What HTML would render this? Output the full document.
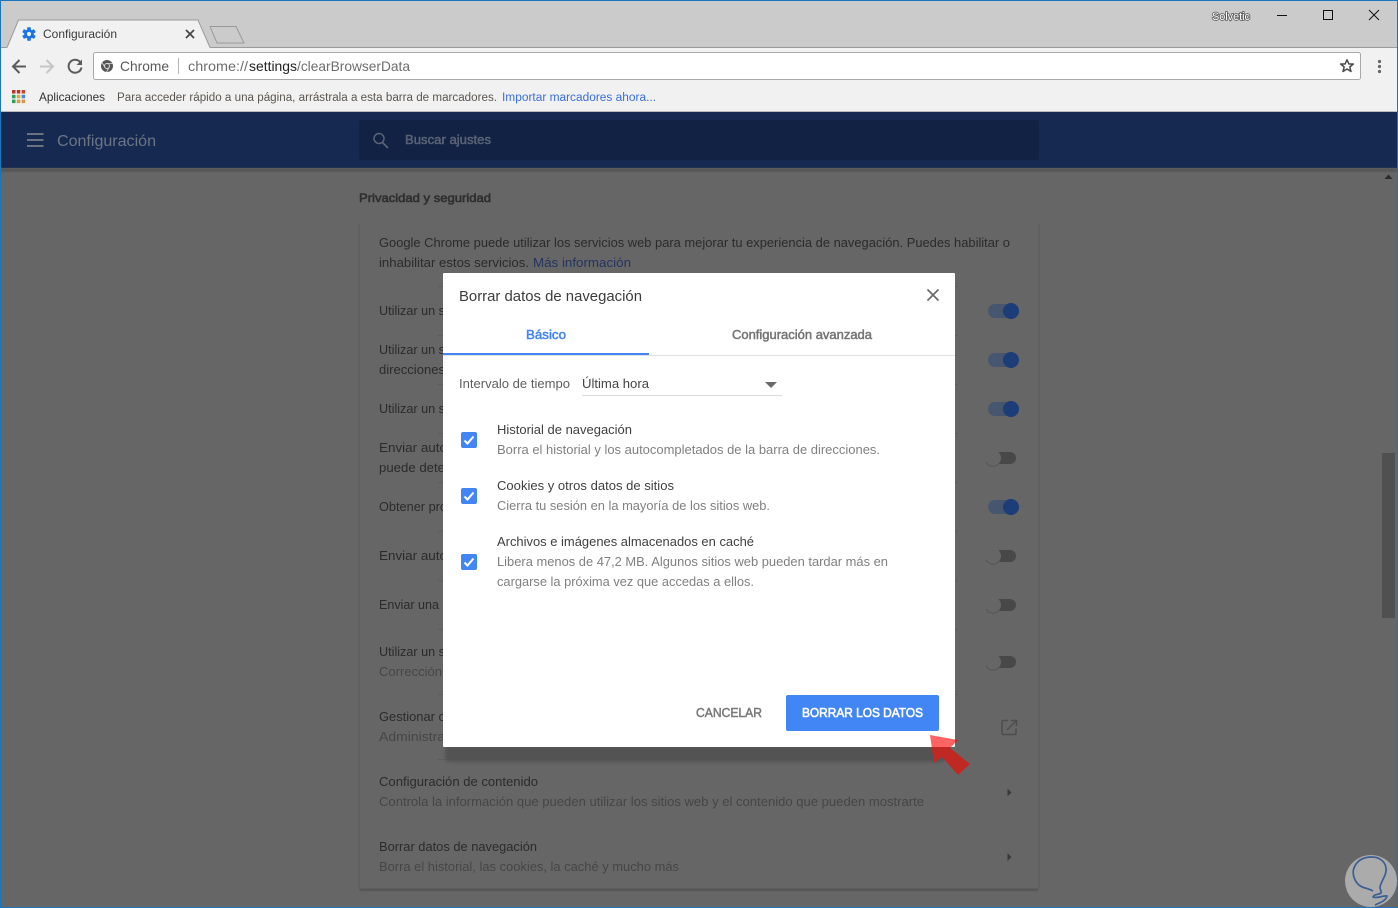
<!DOCTYPE html>
<html lang="es">
<head>
<meta charset="utf-8">
<title>Configuración</title>
<style>
html,body{margin:0;padding:0;width:1398px;height:908px;overflow:hidden;background:#666}
svg{display:block}
text{font-family:"Liberation Sans",sans-serif;white-space:pre}
.m{stroke-width:.5}
</style>
</head>
<body>
<svg xmlns="http://www.w3.org/2000/svg" width="1398" height="908" viewBox="0 0 1398 908">
<defs>
<filter id="bl" x="-10%" y="-50%" width="120%" height="200%"><feGaussianBlur stdDeviation="1.5"/></filter>
<filter id="bl2" x="-10%" y="-10%" width="120%" height="120%"><feGaussianBlur stdDeviation="1"/></filter>
<clipPath id="arrTop"><rect x="920" y="725" width="35" height="22"/></clipPath>
<clipPath id="arrBot"><path d="M955 725H990V790H920V747H955Z"/></clipPath>
<clipPath id="logo"><rect x="1340" y="850" width="57" height="57"/></clipPath>
</defs>

<rect width="1398" height="908" fill="#666"/>

<!-- title bar -->
<rect x="0" y="0" width="1398" height="48" fill="#cbcbcb"/>
<rect x="0" y="47" width="1398" height="1" fill="#9b9b9b"/>
<rect x="0" y="48" width="1398" height="63" fill="#f1f1f1"/>
<rect x="0" y="111" width="1398" height="1" fill="#bcbcbc"/>

<!-- tabs -->
<path d="M210 26.500H236L244 43H217Z" fill="#cbcbcb" stroke="#9a9a9a" stroke-width="1" stroke-linejoin="round"/>
<path d="M7 48L18.500 20H198L210 48Z" fill="#f1f1f1"/>
<path d="M7 47.500L18.500 20H198L210 47.500" fill="none" stroke="#9b9b9b" stroke-width="1"/>
<g transform="translate(29 34)" fill="#1a73e8">
<circle r="4.800"/>
<rect x="-1.800" y="-6.800" width="3.600" height="13.600" rx=".6"/>
<rect x="-1.800" y="-6.800" width="3.600" height="13.600" rx=".6" transform="rotate(60)"/>
<rect x="-1.800" y="-6.800" width="3.600" height="13.600" rx=".6" transform="rotate(120)"/>
<circle r="2.100" fill="#f1f1f1"/>
</g>
<text x="43" y="38" font-size="12" fill="#3a3a3a" textLength="74" lengthAdjust="spacingAndGlyphs">Configuración</text>
<path d="M186 30L194 38M194 30L186 38" stroke="#444" stroke-width="1.700" fill="none"/>

<!-- window controls -->
<text x="1212" y="20" font-size="11" fill="none" stroke="#555" stroke-width="1.500" textLength="38" lengthAdjust="spacingAndGlyphs">Solvetic</text>
<text x="1212" y="20" font-size="11" fill="#fff" textLength="38" lengthAdjust="spacingAndGlyphs">Solvetic</text>
<path d="M1277 15.500H1287" stroke="#111" stroke-width="1"/>
<rect x="1323.500" y="10.500" width="9" height="9" fill="none" stroke="#111" stroke-width="1"/>
<path d="M1369 10L1379 20M1379 10L1369 20" stroke="#111" stroke-width="1" fill="none"/>

<!-- toolbar -->
<path d="M26 66.500H13.500M19.500 60L13 66.500L19.500 73" fill="none" stroke="#5c5c5c" stroke-width="2"/>
<path d="M40 66.500H52.500M46.500 60L53 66.500L46.500 73" fill="none" stroke="#c6c6c6" stroke-width="2"/>
<path d="M80.200 62.200A6.500 6.500 0 1 0 81.500 67.500" fill="none" stroke="#5c5c5c" stroke-width="2"/>
<path d="M82 59.500V65H76.500Z" fill="#5c5c5c"/>
<rect x="93.500" y="52.500" width="1267" height="27" rx="2" fill="#fff" stroke="#a8a8a8"/>
<circle cx="107" cy="66" r="6" fill="#555"/>
<circle cx="107" cy="66" r="2.500" fill="#555" stroke="#ddd" stroke-width="1"/>
<path d="M107 63.500H112.500M104.800 67.200L102 62.500M109 67.500L106.500 72" stroke="#ddd" stroke-width=".8"/>
<text x="120" y="71" font-size="14" fill="#5a5a5a" textLength="49" lengthAdjust="spacingAndGlyphs">Chrome</text>
<rect x="178" y="58" width="1" height="16" fill="#b5b5b5"/>
<text x="188" y="71" font-size="14" fill="#6e6e6e" textLength="60" lengthAdjust="spacingAndGlyphs">chrome://</text>
<text x="249" y="71" font-size="14" fill="#222" textLength="48" lengthAdjust="spacingAndGlyphs">settings</text>
<text x="297" y="71" font-size="14" fill="#6e6e6e" textLength="113" lengthAdjust="spacingAndGlyphs">/clearBrowserData</text>
<path d="M1347 59.800L1348.900 64H1353.300L1349.800 67L1351 71.500L1347 69L1343 71.500L1344.200 67L1340.700 64H1345.100Z" fill="none" stroke="#4a4a4a" stroke-width="1.500" stroke-linejoin="round"/>
<g fill="#666"><circle cx="1379.500" cy="61.500" r="1.600"/><circle cx="1379.500" cy="66.500" r="1.600"/><circle cx="1379.500" cy="71.500" r="1.600"/></g>

<!-- bookmarks -->
<g>
<rect x="12" y="90" width="3.500" height="3.500" fill="#b8352b"/><rect x="16.800" y="90" width="3.500" height="3.500" fill="#b8352b"/><rect x="21.600" y="90" width="3.500" height="3.500" fill="#c8433a"/>
<rect x="12" y="94.800" width="3.500" height="3.500" fill="#2f9e58"/><rect x="16.800" y="94.800" width="3.500" height="3.500" fill="#d8a83a"/><rect x="21.600" y="94.800" width="3.500" height="3.500" fill="#4a86d8"/>
<rect x="12" y="99.600" width="3.500" height="3.500" fill="#2f9e58"/><rect x="16.800" y="99.600" width="3.500" height="3.500" fill="#d89848"/><rect x="21.600" y="99.600" width="3.500" height="3.500" fill="#d89848"/>
</g>
<text x="39" y="101" font-size="12" fill="#333" textLength="66" lengthAdjust="spacingAndGlyphs">Aplicaciones</text>
<text x="117" y="101" font-size="11.500" fill="#5c5650" textLength="380" lengthAdjust="spacingAndGlyphs">Para acceder rápido a una página, arrástrala a esta barra de marcadores.</text>
<text x="502" y="101" font-size="11.500" fill="#3b6fd8" textLength="154" lengthAdjust="spacingAndGlyphs">Importar marcadores ahora...</text>

<!-- settings header -->
<rect x="0" y="112" width="1398" height="56" fill="#152951"/>
<rect x="0" y="168" width="1398" height="4" fill="#555" filter="url(#bl2)"/>
<path d="M27 134H43.500M27 140H43.500M27 146H43.500" stroke="#6a7282" stroke-width="2"/>
<text x="57" y="146" font-size="16" fill="#6d7585" textLength="99" lengthAdjust="spacingAndGlyphs">Configuración</text>
<rect x="359" y="120" width="680" height="40" rx="2" fill="#122244"/>
<circle cx="379" cy="138.500" r="5" fill="none" stroke="#5c6678" stroke-width="1.400"/>
<path d="M382.500 142.500L388 148" stroke="#5c6678" stroke-width="1.600"/>
<text x="405" y="144" font-size="12.500" class="m" fill="#586274" stroke="#586274" textLength="86" lengthAdjust="spacingAndGlyphs">Buscar ajustes</text>

<!-- scrollbar -->
<path d="M1384.500 179L1388.500 174.500L1392.500 179Z" fill="#2b2b2b"/>
<rect x="1382" y="453" width="13" height="165" fill="#505050"/>

<!-- card -->
<text x="359" y="202" font-size="12" fill="#2f2f2f" stroke="#2f2f2f" style="stroke-width:.6" textLength="132" lengthAdjust="spacingAndGlyphs">Privacidad y seguridad</text>
<path d="M359 224V887Q359 889 361 889H1037Q1039 889 1039 887V224" fill="none" stroke="#5a5a5a" stroke-width="1"/>
<rect x="360" y="889" width="678" height="2" fill="#4e4e4e" filter="url(#bl2)"/>
<g fill="#5d5d5d">
<rect x="438" y="286" width="520" height="1"/><rect x="438" y="335" width="520" height="1"/><rect x="438" y="384" width="520" height="1"/>
<rect x="438" y="433" width="520" height="1"/><rect x="438" y="482" width="520" height="1"/><rect x="438" y="531" width="520" height="1"/>
<rect x="438" y="580" width="520" height="1"/><rect x="438" y="629" width="520" height="1"/><rect x="438" y="694" width="520" height="1"/>
<rect x="438" y="759" width="520" height="1"/>
</g>
<text x="379" y="247" font-size="13" fill="#2b2b2b" textLength="631" lengthAdjust="spacingAndGlyphs">Google Chrome puede utilizar los servicios web para mejorar tu experiencia de navegación. Puedes habilitar o</text>
<text x="379" y="267" font-size="13" fill="#2b2b2b" textLength="150" lengthAdjust="spacingAndGlyphs">inhabilitar estos servicios.</text>
<text x="533" y="267" font-size="13" fill="#25345f" textLength="98" lengthAdjust="spacingAndGlyphs">Más información</text>
<g font-size="13" fill="#2b2b2b">
<text x="379" y="315" textLength="66" lengthAdjust="spacingAndGlyphs">Utilizar un s</text>
<text x="379" y="354" textLength="66" lengthAdjust="spacingAndGlyphs">Utilizar un s</text>
<text x="379" y="374" textLength="66" lengthAdjust="spacingAndGlyphs">direcciones</text>
<text x="379" y="413" textLength="66" lengthAdjust="spacingAndGlyphs">Utilizar un s</text>
<text x="379" y="452" textLength="68" lengthAdjust="spacingAndGlyphs">Enviar auto</text>
<text x="379" y="472" textLength="66" lengthAdjust="spacingAndGlyphs">puede dete</text>
<text x="379" y="511" textLength="68" lengthAdjust="spacingAndGlyphs">Obtener pro</text>
<text x="379" y="560" textLength="68" lengthAdjust="spacingAndGlyphs">Enviar auto</text>
<text x="379" y="609" textLength="60" lengthAdjust="spacingAndGlyphs">Enviar una</text>
<text x="379" y="656" textLength="66" lengthAdjust="spacingAndGlyphs">Utilizar un s</text>
<text x="379" y="721" textLength="66" lengthAdjust="spacingAndGlyphs">Gestionar c</text>
<text x="379" y="786" textLength="159" lengthAdjust="spacingAndGlyphs">Configuración de contenido</text>
<text x="379" y="851" textLength="158" lengthAdjust="spacingAndGlyphs">Borrar datos de navegación</text>
</g>
<g font-size="13" fill="#464646">
<text x="379" y="676" textLength="63" lengthAdjust="spacingAndGlyphs">Corrección</text>
<text x="379" y="741" textLength="66" lengthAdjust="spacingAndGlyphs">Administra</text>
<text x="379" y="806" textLength="545" lengthAdjust="spacingAndGlyphs">Controla la información que pueden utilizar los sitios web y el contenido que pueden mostrarte</text>
<text x="379" y="871" textLength="300" lengthAdjust="spacingAndGlyphs">Borra el historial, las cookies, la caché y mucho más</text>
</g>

<!-- toggles on -->
<g fill="#47566f">
<rect x="988" y="304" width="28" height="14" rx="7"/><rect x="988" y="353" width="28" height="14" rx="7"/>
<rect x="988" y="402" width="28" height="14" rx="7"/><rect x="988" y="500" width="28" height="14" rx="7"/>
</g>
<g fill="#1c3d77">
<circle cx="1011" cy="311" r="8"/><circle cx="1011" cy="360" r="8"/><circle cx="1011" cy="409" r="8"/><circle cx="1011" cy="507" r="8"/>
</g>
<!-- toggles off -->
<g fill="#484848">
<rect x="994" y="452" width="22" height="12" rx="6"/><rect x="994" y="550" width="22" height="12" rx="6"/>
<rect x="994" y="599" width="22" height="12" rx="6"/><rect x="994" y="656" width="22" height="12" rx="6"/>
</g>
<g fill="#666">
<circle cx="993" cy="458" r="8"/><circle cx="993" cy="556" r="8"/><circle cx="993" cy="605" r="8"/><circle cx="993" cy="662" r="8"/>
</g>
<g fill="none" stroke="#565656" stroke-width="1">
<path d="M986 462A8 8 0 0 0 1000 462"/><path d="M986 560A8 8 0 0 0 1000 560"/><path d="M986 609A8 8 0 0 0 1000 609"/><path d="M986 666A8 8 0 0 0 1000 666"/>
</g>

<!-- external link and arrows -->
<path d="M1008 720.500H1003.500Q1002 720.500 1002 722V733Q1002 734.500 1003.500 734.500H1014.500Q1016 734.500 1016 733V728.500" fill="none" stroke="#4d4d4d" stroke-width="1.500"/>
<path d="M1011 720.500H1016.500V726M1016 721L1007 730" fill="none" stroke="#4d4d4d" stroke-width="1.500"/>
<path d="M1007.500 788.500L1011.500 792.500L1007.500 796.500Z" fill="#3a3a3a"/>
<path d="M1007.500 853L1011.500 857L1007.500 861Z" fill="#3a3a3a"/>

<!-- dialog shadow -->
<rect x="445" y="745" width="500" height="17" rx="4" fill="#525252" filter="url(#bl)"/>

<!-- dialog -->
<rect x="443" y="273" width="512" height="474" rx="1" fill="#fff"/>
<text x="459" y="301" font-size="14.500" fill="#3c3c3c" textLength="183" lengthAdjust="spacingAndGlyphs">Borrar datos de navegación</text>
<path d="M927.500 289.500L938.500 300.500M938.500 289.500L927.500 300.500" stroke="#6a6a6a" stroke-width="1.700" fill="none"/>
<text x="526" y="339" font-size="12.500" class="m" fill="#4285f4" stroke="#4285f4" textLength="40" lengthAdjust="spacingAndGlyphs">Básico</text>
<text x="732" y="339" font-size="12.500" class="m" fill="#757575" stroke="#757575" textLength="140" lengthAdjust="spacingAndGlyphs">Configuración avanzada</text>
<rect x="443" y="355" width="512" height="1" fill="#e2e2e2"/>
<rect x="443" y="353" width="206" height="2" fill="#4285f4"/>

<text x="459" y="388" font-size="13" fill="#5f5f5f" textLength="111" lengthAdjust="spacingAndGlyphs">Intervalo de tiempo</text>
<text x="582" y="388" font-size="13" fill="#444" textLength="67" lengthAdjust="spacingAndGlyphs">Última hora</text>
<rect x="582" y="395" width="200" height="1" fill="#dcdcdc"/>
<path d="M765 382H777L771 388Z" fill="#6a6a6a"/>

<g fill="#4285f4">
<rect x="461" y="432" width="16" height="16" rx="2"/>
<rect x="461" y="488" width="16" height="16" rx="2"/>
<rect x="461" y="554" width="16" height="16" rx="2"/>
</g>
<g fill="none" stroke="#fff" stroke-width="2">
<path d="M464.500 440.500L467.500 443.500L473.500 436.500"/>
<path d="M464.500 496.500L467.500 499.500L473.500 492.500"/>
<path d="M464.500 562.500L467.500 565.500L473.500 558.500"/>
</g>

<g font-size="13" fill="#404040">
<text x="497" y="434" textLength="135" lengthAdjust="spacingAndGlyphs">Historial de navegación</text>
<text x="497" y="490" textLength="177" lengthAdjust="spacingAndGlyphs">Cookies y otros datos de sitios</text>
<text x="497" y="546" textLength="257" lengthAdjust="spacingAndGlyphs">Archivos e imágenes almacenados en caché</text>
</g>
<g font-size="13" fill="#808080">
<text x="497" y="454" textLength="383" lengthAdjust="spacingAndGlyphs">Borra el historial y los autocompletados de la barra de direcciones.</text>
<text x="497" y="510" textLength="273" lengthAdjust="spacingAndGlyphs">Cierra tu sesión en la mayoría de los sitios web.</text>
<text x="497" y="566" textLength="391" lengthAdjust="spacingAndGlyphs">Libera menos de 47,2 MB. Algunos sitios web pueden tardar más en</text>
<text x="497" y="586" textLength="257" lengthAdjust="spacingAndGlyphs">cargarse la próxima vez que accedas a ellos.</text>
</g>

<text x="696" y="717" font-size="12.500" class="m" fill="#7a7a7a" stroke="#7a7a7a" textLength="66" lengthAdjust="spacingAndGlyphs">CANCELAR</text>
<rect x="786" y="695" width="153" height="36" rx="2" fill="#4285f4"/>
<text x="802" y="717" font-size="12.500" fill="#fff" stroke="#fff" style="stroke-width:.6" textLength="121" lengthAdjust="spacingAndGlyphs">BORRAR LOS DATOS</text>

<!-- red arrow -->
<g clip-path="url(#arrBot)"><path d="M930 735L958 740L950 748L970 764L958 775L942 757L934 763Z" fill="#c02824"/></g>
<g clip-path="url(#arrTop)"><path d="M930 735L958 740L950 748L970 764L958 775L942 757L934 763Z" fill="#ff6363"/></g>

<!-- watermark logo -->
<g clip-path="url(#logo)">
<circle cx="1371" cy="881" r="26" fill="#ababab"/>
<path d="M1373 891C1368 888 1361 888 1358 884C1354 880 1352 873 1354 868C1357 860 1364 857 1372 857C1379 857 1385 861 1386 868C1387 875 1381 881 1380 887C1380 890 1382 892 1381 893C1378 895 1374 894 1373 897C1377 899 1384 895 1387 896C1386 901 1379 903 1375 905" fill="none" stroke="#3b5f92" stroke-width="1.700"/>
</g>

<!-- window border -->
<rect x="0" y="0" width="1398" height="1" fill="#1b75bc"/>
<rect x="0" y="0" width="1" height="908" fill="#1b75bc"/>
<rect x="1397" y="0" width="1" height="908" fill="#1b75bc"/>
<rect x="0" y="907" width="1398" height="1" fill="#1b75bc"/>
</svg>
</body>
</html>
